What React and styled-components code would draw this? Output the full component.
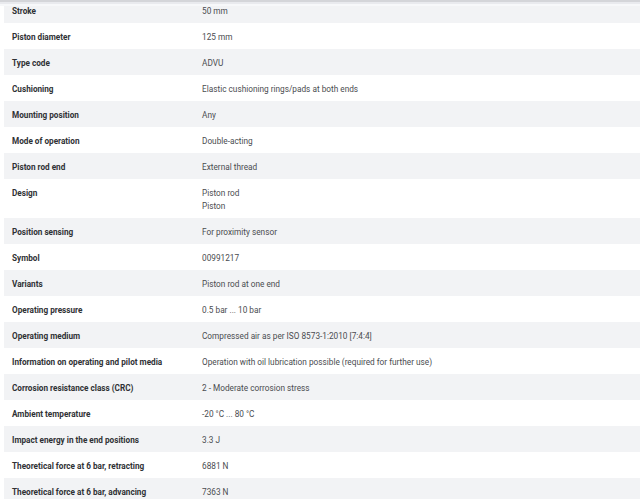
import React from "react";
import styled, { createGlobalStyle } from "styled-components";

const Global = createGlobalStyle`
  html, body {
    margin: 0;
    padding: 0;
    background: #ffffff;
  }
  body {
    font-family: Roboto, "Liberation Sans", sans-serif;
    overflow: hidden;
  }
`;

const Shade = styled.div`
  position: fixed;
  top: 0;
  left: 0;
  right: 0;
  height: 6px;
  background: linear-gradient(#d4d5d9 0 2px, #e9eaee 2px 4px, #f7f8fa 4px 6px);
`;

const Table = styled.div`
  display: flex;
  flex-direction: column;
  margin-top: -3px;
  padding-left: 4px;
`;

const Row = styled.div`
  display: grid;
  grid-template-columns: 190px 1fr;
  align-items: baseline;
  box-sizing: border-box;
  padding: 8px 0 5px 8px;
  background: ${(p) => (p.$shaded ? "#f2f3f5" : "#ffffff")};
`;

const Label = styled.div`
  font-size: 8.2px;
  font-weight: 700;
  line-height: 13px;
  color: #2f3134;
`;

const Value = styled.div`
  font-size: 8.25px;
  line-height: 13px;
  color: #4a4c50;
`;

const rows = [
  ["Stroke", ["50 mm"]],
  ["Piston diameter", ["125 mm"]],
  ["Type code", ["ADVU"]],
  ["Cushioning", ["Elastic cushioning rings/pads at both ends"]],
  ["Mounting position", ["Any"]],
  ["Mode of operation", ["Double-acting"]],
  ["Piston rod end", ["External thread"]],
  ["Design", ["Piston rod", "Piston"]],
  ["Position sensing", ["For proximity sensor"]],
  ["Symbol", ["00991217"]],
  ["Variants", ["Piston rod at one end"]],
  ["Operating pressure", ["0.5 bar ... 10 bar"]],
  ["Operating medium", ["Compressed air as per ISO 8573-1:2010 [7:4:4]"]],
  ["Information on operating and pilot media", ["Operation with oil lubrication possible (required for further use)"]],
  ["Corrosion resistance class (CRC)", ["2 - Moderate corrosion stress"]],
  ["Ambient temperature", ["-20 °C ... 80 °C"]],
  ["Impact energy in the end positions", ["3.3 J"]],
  ["Theoretical force at 6 bar, retracting", ["6881 N"]],
  ["Theoretical force at 6 bar, advancing", ["7363 N"]],
];

const App = () => {
  return (
    <>
      <Global />
      <Table>
        {rows.map(([label, values], i) => (
          <Row key={label} $shaded={i % 2 === 0}>
            <Label>{label}</Label>
            <Value>
              {values.map((v) => (
                <div key={v}>{v}</div>
              ))}
            </Value>
          </Row>
        ))}
      </Table>
      <Shade />
    </>
  );
};

export default App;
